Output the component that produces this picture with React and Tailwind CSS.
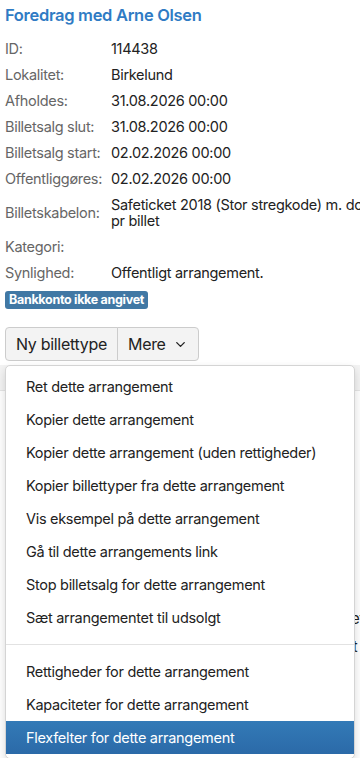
import { ChevronDown } from 'lucide-react';

const rows = [
  ['ID:', '114438'],
  ['Lokalitet:', 'Birkelund'],
  ['Afholdes:', '31.08.2026 00:00'],
  ['Billetsalg slut:', '31.08.2026 00:00'],
  ['Billetsalg start:', '02.02.2026 00:00'],
  ['Offentliggøres:', '02.02.2026 00:00'],
  ['Billetskabelon:', 'Safeticket 2018 (Stor stregkode) m. dobbelt stub pr billet'],
  ['Kategori:', ''],
  ['Synlighed:', 'Offentligt arrangement.'],
];

const menuTop = [
  'Ret dette arrangement',
  'Kopier dette arrangement',
  'Kopier dette arrangement (uden rettigheder)',
  'Kopier billettyper fra dette arrangement',
  'Vis eksempel på dette arrangement',
  'Gå til dette arrangements link',
  'Stop billetsalg for dette arrangement',
  'Sæt arrangementet til udsolgt',
];

const menuBottom = [
  'Rettigheder for dette arrangement',
  'Kapaciteter for dette arrangement',
  'Flexfelter for dette arrangement',
];

const App = () => (
  <div className="w-[360px] h-[758px] overflow-hidden bg-white font-['Inter',sans-serif] text-[#222] tracking-[-0.3px]">
    <div className="px-[5px] pt-[4px]">
      <h1 className="text-[16.5px] font-semibold text-[#2f7bc4] leading-[22px]">Foredrag med Arne Olsen</h1>

      <div className="mt-[10px]">
        {rows.map(([k, v], i) => (
          <div
            key={i}
            className={k === 'Billetskabelon:' ? 'flex h-[42px] items-center text-[14.5px]' : 'flex h-[26px] items-center text-[14.5px]'}
          >
            <div className="w-[106px] shrink-0 text-[#666]">{k}</div>
            <div className="whitespace-nowrap leading-[16px]">
              {k === 'Billetskabelon:' ? (
                <>Safeticket 2018 (Stor stregkode) m. dobbelt stub<br />pr billet</>
              ) : v}
            </div>
          </div>
        ))}
      </div>

      <span className="inline-block mt-[5px] rounded-[3px] bg-[#4178a4] px-[4px] text-[12.5px] font-bold leading-[18px] text-white">
        Bankkonto ikke angivet
      </span>

      <div className="mt-[17px] flex">
        <button className="h-[34px] rounded-l-[4px] border border-[#ccc] bg-[#f3f3f3] px-[10px] text-[16px] text-[#222]">
          Ny billettype
        </button>
        <button className="-ml-px flex h-[34px] items-center gap-[7px] rounded-r-[4px] border border-[#ccc] bg-[#f3f3f3] px-[10px] text-[16px] text-[#222]">
          Mere <ChevronDown className="h-[15px] w-[15px]" strokeWidth={2.2} />
        </button>
      </div>
    </div>

    <div className="relative mt-[4px]">
      <div className="h-[26px] bg-[#f3f3f3] border-b border-[#e5e5e5]" />
      <div className="h-[214px]" />
      <div className="whitespace-nowrap pl-[300px] text-[15px] leading-[28px]">
        <div>Kapaciteter og dato</div>
        <div>Oversigt over leder</div>
      </div>

      <div className="absolute left-[5px] top-[0px] w-[350px] rounded-[5px] border border-[#d4d4d4] bg-white py-[4px] shadow-[0_4px_10px_rgba(0,0,0,0.15)] text-[14.5px]">
        {menuTop.map((t) => (
          <div key={t} className="flex h-[33px] items-center px-[20px] whitespace-nowrap">{t}</div>
        ))}
        <div className="my-[10px] border-t border-[#e2e2e2]" />
        {menuBottom.map((t, i) => (
          <div
            key={t}
            className={
              i === 2
                ? 'flex h-[33px] items-center px-[20px] whitespace-nowrap text-white bg-gradient-to-b from-[#337ab7] to-[#2b6aa8]'
                : 'flex h-[33px] items-center px-[20px] whitespace-nowrap'
            }
          >
            {t}
          </div>
        ))}
      </div>
    </div>
  </div>
);

export default App;
